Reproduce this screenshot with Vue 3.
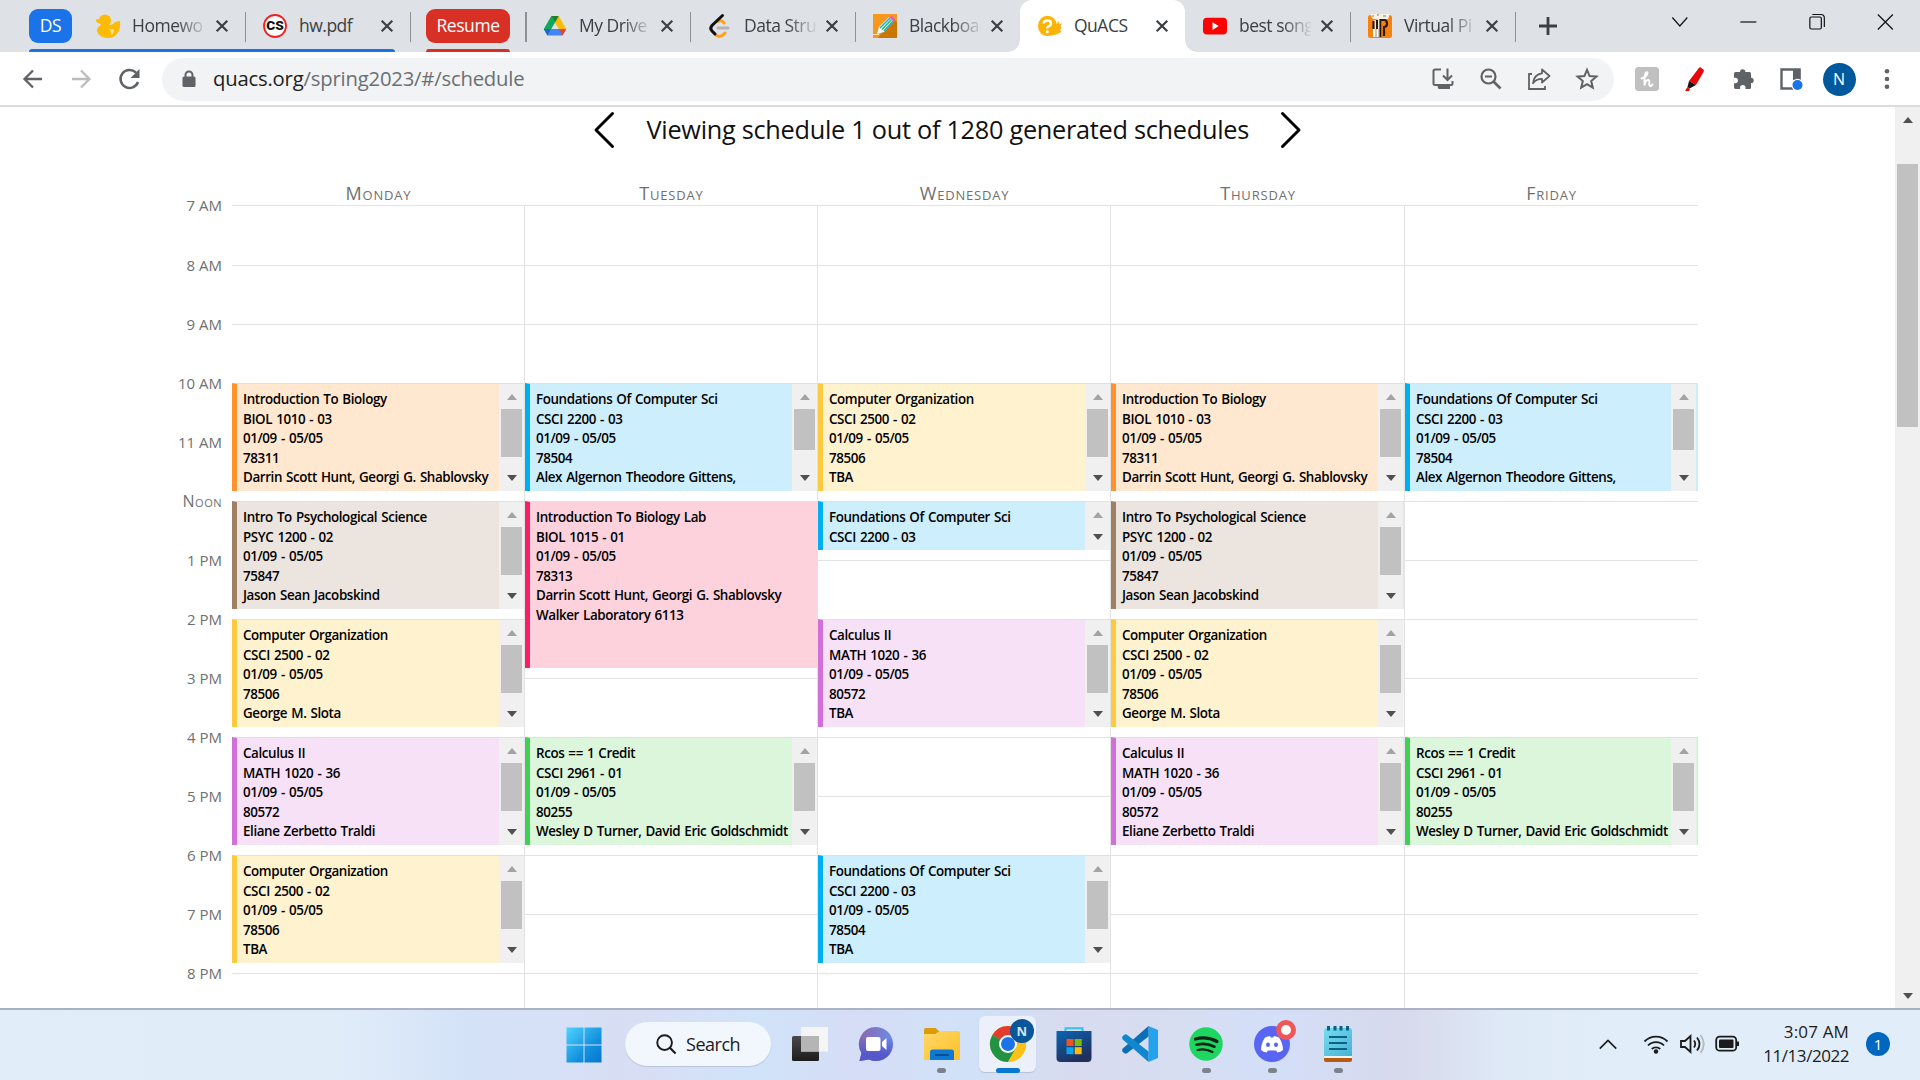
<script setup>
const tabs = [
  { icon: 'duck', title: 'Homewo', fade: true },
  { icon: 'cs', title: 'hw.pdf' },
  { chip: 'Resume' },
  { icon: 'drive', title: 'My Drive', fade: true },
  { icon: 'leet', title: 'Data Stru', fade: true },
  { icon: 'pencil', title: 'Blackboa', fade: true },
  { icon: 'quacs', title: 'QuACS', active: true },
  { icon: 'youtube', title: 'best song', fade: true },
  { icon: 'piano', title: 'Virtual Pi', fade: true },
]

const hours = ['7 AM', '8 AM', '9 AM', '10 AM', '11 AM', 'Noon', '1 PM', '2 PM', '3 PM', '4 PM', '5 PM', '6 PM', '7 PM', '8 PM']

const bio = (extra) => ({ tone: 'orange', lines: ['Introduction To Biology', 'BIOL 1010 - 03', '01/09 - 05/05', '78311', extra], thumb: 48, h: 108 })
const psy = () => ({ tone: 'brown', lines: ['Intro To Psychological Science', 'PSYC 1200 - 02', '01/09 - 05/05', '75847', 'Jason Sean Jacobskind'], thumb: 48, h: 108 })
const org = (who) => ({ tone: 'yellow', lines: ['Computer Organization', 'CSCI 2500 - 02', '01/09 - 05/05', '78506', who], thumb: 48, h: 108 })
const calc = (who) => ({ tone: 'purple', lines: ['Calculus II', 'MATH 1020 - 36', '01/09 - 05/05', '80572', who], thumb: 48, h: 108 })
const focs = (who, thumb) => ({ tone: 'blue', lines: ['Foundations Of Computer Sci', 'CSCI 2200 - 03', '01/09 - 05/05', '78504', who], thumb, h: 108 })
const rcos = () => ({ tone: 'green', lines: ['Rcos == 1 Credit', 'CSCI 2961 - 01', '01/09 - 05/05', '80255', 'Wesley D Turner, David Eric Goldschmidt'], thumb: 48, h: 108 })
const instructors = 'Darrin Scott Hunt, Georgi G. Shablovsky'

const days = [
  { name: 'Monday', slots: { 3: bio(instructors), 5: psy(), 7: org('George M. Slota'), 9: calc('Eliane Zerbetto Traldi'), 11: org('TBA') } },
  {
    name: 'Tuesday',
    slots: {
      3: focs('Alex Algernon Theodore Gittens,', 41),
      5: { tone: 'pink', lines: ['Introduction To Biology Lab', 'BIOL 1015 - 01', '01/09 - 05/05', '78313', instructors, 'Walker Laboratory 6113'], thumb: 0, h: 167, full: true },
      9: rcos(),
    },
  },
  {
    name: 'Wednesday',
    slots: {
      3: org('TBA'),
      5: { tone: 'blue', lines: ['Foundations Of Computer Sci', 'CSCI 2200 - 03'], thumb: 0, h: 49 },
      7: calc('TBA'),
      11: focs('TBA', 48),
    },
  },
  { name: 'Thursday', slots: { 3: bio(instructors), 5: psy(), 7: org('George M. Slota'), 9: calc('Eliane Zerbetto Traldi') } },
  { name: 'Friday', slots: { 3: focs('Alex Algernon Theodore Gittens,', 41), 9: rcos() } },
]
</script>

<template>
  <div class="screen">
    <header class="tabstrip">
      <div class="chip ds">DS</div>
      <template v-for="(t, i) in tabs" :key="i">
        <div v-if="t.chip" class="chip resume">{{ t.chip }}</div>
        <div v-else class="tab" :class="{ active: t.active, first: i === 0, nosep: t.icon === 'pencil' }">
          <svg class="fav" viewBox="0 0 24 24">
            <g v-if="t.icon === 'duck'" fill="#fdbb05">
              <circle cx="9" cy="6.500" r="6" /><path d="M0 5.500l5-1v5H3.500Q0 9 0 5.500z" />
              <path d="M5 11q4 2 8 0 4 0 6-3l5-1q1 8-3 13-3 4-9 4-9 0-11-7 0-4 4-6z" />
              <path d="M13 15h5q0 5-3 6 1-4-2-6z" fill="#ffe49a" />
            </g>
            <g v-else-if="t.icon === 'cs'">
              <circle cx="12" cy="12" r="11" fill="#fff" stroke="#f3201d" stroke-width="1.800" />
              <text x="12" y="16.200" text-anchor="middle" font-family="Roboto, sans-serif" font-weight="900" font-size="12" textLength="17.500" lengthAdjust="spacingAndGlyphs" fill="#111">CS</text>
            </g>
            <g v-else-if="t.icon === 'drive'">
              <path d="M8.300 2h7.400L4.500 21.500.800 15z" fill="#11a85b" /><path d="M15.700 2l7.500 13h-7.400L8.300 2z" fill="#fbbc04" /><path d="M8.300 2h7.400L12 8.400z" fill="#188038" />
              <path d="M8.300 15h14.900l-3.700 6.500h-15z" fill="#4285f4" /><path d="M15.800 15h7.400l-3.700 6.500z" fill="#ea4335" /><path d="M4.500 21.500L8.200 15H.800z" fill="#1967d2" />
            </g>
            <g v-else-if="t.icon === 'leet'" fill="none" stroke-linecap="round" stroke-width="3">
              <path d="M10 7.500q3-2.500 6 1.500M6 19q5 7 11 0" stroke="#ffa116" /><path d="M10 14h10" stroke="#b3b3b3" /><path d="M14.500 1.500L4 11.500q-2.500 3 0 5.500l3 3" stroke="#111" />
            </g>
            <g v-else-if="t.icon === 'pencil'">
              <path d="M0 0h24v24H0z" fill="#f7981d" /><path d="M20 4l4 4v16H5z" fill="#c97700" />
              <path d="M4 20l2-7L16 3l5 4-10 11z" fill="#eafcff" /><path d="M7 14L17 4M11 17l9-10" stroke="#22a9d8" stroke-width="1.500" /><path d="M9 15.500L18.500 5.500" stroke="#35c75a" stroke-width="1.800" /><path d="M16 3l3-1 3 3-1 3z" fill="#e55ac0" /><path d="M0 20.500h6" stroke="#ffe2b0" />
            </g>
            <g v-else-if="t.icon === 'quacs'">
              <ellipse cx="9.500" cy="12" rx="9.500" ry="10.200" fill="#fdb305" /><path d="M13 9l5 2 3-4 .500 3.500L24 9l-1.500 4 1.500.500-2 2.500 1.500 2-5 2.500-6 1z" fill="#fdb305" />
              <path d="M5.500 9.500Q6 6.500 9.500 6.500t3.500 3q0 1.800-2 2.700T9.300 14.500" fill="none" stroke="#fff" stroke-width="2.400" /><circle cx="9.300" cy="17.700" r="1.500" fill="#fff" />
            </g>
            <g v-else-if="t.icon === 'youtube'"><rect y="3.800" width="24" height="16.700" rx="4" fill="#f00" /><path d="M9.500 8.300l6.200 3.800-6.200 3.800z" fill="#fff" /></g>
            <g v-else>
              <rect y="1" width="24" height="23" rx="2.500" fill="#f7820f" /><path d="M2 0h20l-2 5H5z" fill="#fbeee4" /><path d="M4 2h2M9 1h2M15 2h3" stroke="#4a9b6a" /><path d="M5 7l9-3v19H5z" fill="#fff" />
              <path d="M5.500 7v8M9 6v9M12.500 5v18" stroke="#2b1a0c" stroke-width="2.200" /><path d="M8 15v8M11 15v8" stroke="#8a6a4a" stroke-width=".8" /><path d="M12.500 6h3.500q3 0 3 3.500T16 13v9" fill="none" stroke="#2b1a0c" stroke-width="2.200" />
            </g>
          </svg>
          <span class="title" :class="{ fade: t.fade }">{{ t.title }}</span>
          <svg class="x" viewBox="0 0 12 12"><path d="M.700.700l10.600 10.600M11.300.700L.700 11.300" stroke="#3c4043" stroke-width="2.200" /></svg>
        </div>
      </template>
      <svg class="plus" viewBox="0 0 18 18"><path d="M9 0v18M0 9h18" stroke="#3c4043" stroke-width="2.800" /></svg>
      <div class="winctl">
        <svg viewBox="0 0 68 44"><path d="M27 17.500l7.500 8.500 7.500-8.500" /></svg>
        <svg viewBox="0 0 68 44"><path d="M26 22h16" /></svg>
        <svg viewBox="0 0 68 44"><rect x="26.500" y="17" width="11.500" height="12" rx="1.500" /><path d="M29 14.500h8.500q3.500 0 3.500 3.500V27" /></svg>
        <svg viewBox="0 0 68 44"><path d="M26.500 14.500l15 15M41.500 14.500l-15 15" /></svg>
      </div>
    </header>

    <div class="toolbar">
      <svg class="nav" viewBox="0 0 24 24"><path d="M21 12H4M12 3.500L3.500 12l8.500 8.500" fill="none" stroke="#5f6368" stroke-width="2.300" /></svg>
      <svg class="nav" viewBox="0 0 24 24"><path d="M3 12h17M12 3.500l8.500 8.500-8.500 8.500" fill="none" stroke="#babcbe" stroke-width="2.300" /></svg>
      <svg class="nav" viewBox="0 0 24 24"><path d="M21 15a9 9 0 1 1-2-9.300" fill="none" stroke="#5f6368" stroke-width="2.500" /><path d="M22.500 2v9h-9z" fill="#5f6368" /></svg>
      <div class="omnibox">
        <svg class="lock" viewBox="0 0 14 18"><rect x=".5" y="6.500" width="13" height="10.500" rx="1.500" fill="#5f6368" /><path d="M3.500 8V5a3.500 3.500 0 0 1 7 0v3" fill="none" stroke="#5f6368" stroke-width="2" /></svg>
        <span class="url"><b>quacs.org</b>/spring2023/#/schedule</span>
        <div class="actions">
          <svg viewBox="0 0 24 24"><path d="M10 2.500H4q-1.500 0-1.500 1.500v12.500q0 1.500 1.500 1.500h16q1.500 0 1.500-1.500V14" fill="none" stroke="#5f6368" stroke-width="2" /><path d="M6 18h13v4H7.500z" fill="#5f6368" /><path d="M16.500 1.500v11M12 8.500l4.500 4.500L21 8.500" fill="none" stroke="#5f6368" stroke-width="2" /></svg>
          <svg viewBox="0 0 24 24"><circle cx="9.500" cy="9.500" r="7" fill="none" stroke="#5f6368" stroke-width="2.200" /><path d="M14.500 14.500l7 7" stroke="#5f6368" stroke-width="2.600" /><path d="M6 9.500h7" stroke="#5f6368" stroke-width="2" /></svg>
          <svg viewBox="0 0 24 24"><path d="M5 7H2v15h16v-3" fill="none" stroke="#5f6368" stroke-width="1.800" /><path d="M15 2.500l7.500 6.500-7.500 6.500v-3.700q-6 0-9 4.500 1-9 9-10z" fill="none" stroke="#5f6368" stroke-width="1.800" stroke-linejoin="round" /></svg>
          <svg viewBox="0 0 24 24"><path d="M12 2.800l2.600 6.300 6.800.500-5.200 4.400 1.600 6.700-5.800-3.600-5.800 3.600 1.600-6.700-5.200-4.400 6.800-.500z" fill="none" stroke="#5f6368" stroke-width="2" /></svg>
        </div>
      </div>
      <div class="exts">
        <svg viewBox="0 0 24 24"><rect width="24" height="24" rx="3.500" fill="#c0c0c0" /><path d="M6.500 11.500Q12 9.500 12.500 6q-.300-1.500-1.500-.500-1.500 2-1.500 7.500v5.500q1-5.500 3.500-5.500 1.500 0 1.300 2.500-.300 3.500 1.200 3.500 1.200 0 2-1.500" fill="none" stroke="#fff" stroke-width="1.900" stroke-linecap="round" /></svg>
        <svg viewBox="0 0 24 24"><path d="M15.500 1.500L17 0l4 3-.500 2L13 18l-7-4z" fill="#e8090b" /><path d="M6 14l7 4-6.500 3.500-2-1.500z" fill="#1b1414" /><path d="M4.500 20l2.500 2-1 2H2z" fill="#e8090b" /></svg>
        <svg viewBox="0 0 24 24"><path d="M9 5a2.700 2.700 0 0 1 5.400 0h4.100q1.500 0 1.500 1.500v4.200a2.700 2.700 0 0 1 0 5.400v4.400q0 1.500-1.500 1.500h-4v-1.200a2.700 2.700 0 0 0-5.400 0V22H5q-2 0-2-1.500v-4.300h1.200a2.700 2.700 0 0 0 0-5.400H3V6.500Q3 5 4.500 5z" fill="#5f6368" /></svg>
        <svg viewBox="0 0 24 24"><path d="M2.500 2.500h18v19h-18z" fill="none" stroke="#5f6368" stroke-width="2.400" /><path d="M14 2.500h7.500v11H14z" fill="#5f6368" /><circle cx="18.500" cy="18" r="6.200" fill="#fff" /><circle cx="18.500" cy="18" r="5" fill="#1a73e8" /></svg>
        <div class="avatar">N</div>
        <svg viewBox="0 0 24 24"><g fill="#5f6368"><circle cx="12" cy="4.200" r="2.300" /><circle cx="12" cy="12" r="2.300" /><circle cx="12" cy="19.800" r="2.300" /></g></svg>
      </div>
    </div>

    <main class="page">
      <div class="content">
        <div class="pager">
          <svg viewBox="0 0 20 36"><path d="M18.500 1.500L2 18l16.500 16.500" /></svg>
          <h1>Viewing schedule 1 out of 1280 generated schedules</h1>
          <svg viewBox="0 0 20 36"><path d="M1.500 1.500L18 18 1.500 34.500" /></svg>
        </div>
        <div class="schedule">
          <div class="hours">
            <div v-for="h in hours" :key="h" class="hour" :class="{ noon: h === 'Noon' }"><span>{{ h }}</span></div>
          </div>
          <div v-for="d in days" :key="d.name" class="day">
            <div class="dayname">{{ d.name }}</div>
            <div class="cells">
              <div v-for="(h, i) in hours" :key="h" class="cell">
                <article v-if="d.slots[i]" class="event" :class="d.slots[i].tone" :style="{ height: d.slots[i].h + 'px' }">
                  <div class="lines">
                    <p v-for="l in d.slots[i].lines" :key="l">{{ l }}</p>
                  </div>
                  <div v-if="!d.slots[i].full" class="bar">
                    <i class="up"></i>
                    <i v-if="d.slots[i].thumb" class="thumb" :style="{ height: d.slots[i].thumb + 'px' }"></i>
                    <i class="down"></i>
                  </div>
                </article>
              </div>
            </div>
          </div>
        </div>
      </div>
      <div class="pagebar"><i class="up"></i><i class="thumb"></i><i class="down"></i></div>
    </main>

    <footer class="taskbar">
      <div class="apps">
        <div class="app win">
          <svg viewBox="0 0 36 36"><defs><linearGradient id="w" x1="0" y1="0" x2="1" y2="1"><stop stop-color="#4fd4ff" /><stop offset=".6" stop-color="#1492de" /><stop offset="1" stop-color="#0675cf" /></linearGradient></defs><path fill="url(#w)" d="M.500.500h17v17H.500zM18.500.500h17v17h-17zM.500 18.500h17v17H.500zM18.500 18.500h17v17h-17z" /></svg>
        </div>
        <div class="search">
          <svg viewBox="0 0 22 22"><circle cx="9" cy="9" r="7.700" fill="none" stroke="#1b1b1b" stroke-width="2" /><path d="M14.500 14.500l6 6" stroke="#1b1b1b" stroke-width="2.300" /></svg>
          <span>Search</span>
        </div>
        <div class="app">
          <svg viewBox="0 0 36 36"><defs><linearGradient id="tv" x1="0" y1="0" x2="0" y2="1"><stop stop-color="#4a4a4a" /><stop offset="1" stop-color="#1c1c1c" /></linearGradient></defs><rect y="10" width="27" height="25" rx="1.500" fill="url(#tv)" /><path d="M9 1h27v24.500H9z" fill="#f5f5f5" /><path d="M9 10h18v15.500H9z" fill="#b5b5b5" /></svg>
        </div>
        <div class="app">
          <svg viewBox="0 0 36 36"><defs><linearGradient id="ch" x1="0" y1="0" x2="1" y2=".3"><stop stop-color="#8d66a8" /><stop offset="1" stop-color="#6a8ceb" /></linearGradient><linearGradient id="ch2" x1="0" y1="0" x2="0" y2="1"><stop offset=".3" stop-color="#5558c8" stop-opacity="0" /><stop offset=".8" stop-color="#5558c8" /></linearGradient></defs>
            <path d="M18 1a17 17 0 1 1-7 32.500L1.500 35 3.500 27A17 17 0 0 1 18 1z" fill="url(#ch)" /><path d="M18 1a17 17 0 1 1-7 32.500L1.500 35 3.500 27A17 17 0 0 1 18 1z" fill="url(#ch2)" /><rect x="8" y="11" width="14.500" height="14" rx="2" fill="#fff" /><path d="M24 16l4.500-4v12L24 20z" fill="#fff" /></svg>
        </div>
        <div class="app">
          <svg viewBox="0 0 36 36"><defs><linearGradient id="fo" x1="0" y1="0" x2="1" y2="1"><stop stop-color="#ffd866" /><stop offset="1" stop-color="#fcbf29" /></linearGradient></defs><path d="M0 4q0-2 2-2h9.500l4 3.500L11 9H0z" fill="#dd9c06" /><path d="M0 8h11.500l4-3H34q2 0 2 2v27H0z" fill="url(#fo)" /><path d="M6 34V26q0-2.500 2.500-2.500h19Q30 23.500 30 26v8z" fill="#0f78d0" /><path d="M11 29h14" stroke="#0a4e94" stroke-width="2" /></svg>
          <i class="dot"></i>
        </div>
        <div class="app on">
          <svg viewBox="0 0 36 36"><circle cx="18" cy="18" r="18" fill="#fbc116" /><path d="M18 18L2.400 9A18 18 0 0 1 33.600 9z" fill="#e33b2e" /><path d="M2.400 9A18 18 0 0 0 18 36L25.800 22.500 18 18z" fill="#229342" /><path d="M33.600 9H18a9 9 0 0 1 7.800 13.500L18 36A18 18 0 0 0 33.600 9z" fill="#fbc116" /><circle cx="18" cy="18" r="9" fill="#fff" /><circle cx="18" cy="18" r="7" fill="#1a73e8" /></svg>
          <b class="nbadge">N</b>
          <i class="dot wide"></i>
        </div>
        <div class="app">
          <svg viewBox="0 0 36 36"><defs><linearGradient id="st" x1="0" y1="0" x2=".5" y2="1"><stop stop-color="#0b66b4" /><stop offset="1" stop-color="#202f5c" /></linearGradient></defs><path d="M9.500 6V2.200h17V6" fill="none" stroke="#35bff0" stroke-width="2" /><path d="M.500 5h35v27q0 4-4 4h-27q-4 0-4-4z" fill="url(#st)" /><path d="M10.500 13h7v7h-7z" fill="#f4511e" /><path d="M18.700 13h7v7h-7z" fill="#80ba04" /><path d="M10.500 21.200h7v7h-7z" fill="#05a6f0" /><path d="M18.700 21.200h7v7h-7z" fill="#ffba08" /></svg>
        </div>
        <div class="app">
          <svg viewBox="0 0 36 36"><path d="M26.500 0L36 4v28l-9.500 4z" fill="#24a2ee" /><path d="M26.500 0v10.500L5 27.300q-1.500.800-3-.300L.500 25.500q-1-1.500.300-3z" fill="#0a6fb5" /><path d="M26.500 36V25.500L5 8.700q-1.500-.800-3 .300L.500 10.500q-1 1.500.300 3z" fill="#1087cf" /></svg>
        </div>
        <div class="app">
          <svg viewBox="0 0 36 36"><circle cx="18" cy="18" r="16.700" fill="#1ed760" /><path d="M7.500 13q11-3 21.500 2.500" fill="none" stroke="#14231a" stroke-width="3.200" stroke-linecap="round" /><path d="M8.500 18.700q9.500-2.500 18 2" fill="none" stroke="#14231a" stroke-width="2.700" stroke-linecap="round" /><path d="M9.500 24q8-2 15 2" fill="none" stroke="#14231a" stroke-width="2.200" stroke-linecap="round" /></svg>
          <i class="dot"></i>
        </div>
        <div class="app">
          <svg viewBox="0 0 36 36"><circle cx="18" cy="18" r="18" fill="#5865f2" /><path d="M11 11.500q3-1.500 5-1.500l.700 1.500h2.600L20 10q2 0 5 1.500 4 6 4 12.500-2.500 2-5.500 2.500L22 24.500h-8l-1.500 2Q9.500 26 7 24q0-6.500 4-12.500z" fill="#fff" /><ellipse cx="14" cy="18.800" rx="2" ry="2.300" fill="#5865f2" /><ellipse cx="22" cy="18.800" rx="2" ry="2.300" fill="#5865f2" /></svg>
          <b class="rbadge"></b>
          <i class="dot"></i>
        </div>
        <div class="app">
          <svg viewBox="0 0 36 36"><defs><linearGradient id="np" x1="0" y1="0" x2="1" y2="1"><stop stop-color="#76dcf0" /><stop offset="1" stop-color="#48b2d4" /></linearGradient></defs><path d="M4 31h28v3q0 2-2 2H6q-2 0-2-2z" fill="#b85a10" /><path d="M4 29h28v3H4z" fill="#f4f4f4" /><path d="M4 5q0-3 3-3h22q3 0 3 3v25H4z" fill="url(#np)" /><path d="M8.500 0v4.500M15 0v4.500M21 0v4.500M27.500 0v4.500" stroke="#0b5f80" stroke-width="3" /><path d="M9 11h18M9 17h18M9 23h18" stroke="#0c6283" stroke-width="2" /></svg>
          <i class="dot"></i>
        </div>
      </div>
      <div class="tray">
        <svg class="chev" viewBox="0 0 24 24"><path d="M3 17l9-9 9 9" /></svg>
        <svg class="wifi" viewBox="0 0 26 24"><path d="M1.500 9.500a16 16 0 0 1 23 0M5 13.500a11 11 0 0 1 16 0M8.800 17a6 6 0 0 1 8.400 0" /><circle cx="13" cy="19.500" r="2.200" fill="#1b1b1b" stroke="none" /></svg>
        <svg class="vol" viewBox="0 0 26 24"><path d="M2 9h4l5.500-5v16L6 15H2zM15 8.500q2.500 3.500 0 7M18 5.500q5 6.500 0 13" /><path d="M21.500 3q6.500 9 0 18" stroke="#b4bac1" /></svg>
        <svg class="bat" viewBox="0 0 26 24"><rect x="1.200" y="4.700" width="20" height="14" rx="3.500" /><rect x="4" y="7.500" width="14.500" height="8.500" rx="1" fill="#1b1b1b" stroke="none" /><path d="M22.500 9.500v4.500" stroke-width="3" /></svg>
        <div class="clock"><span class="time">3:07 AM</span><span class="date">11/13/2022</span></div>
        <div class="notif">1</div>
      </div>
    </footer>
  </div>
</template>

<style>
body { overflow: hidden; background: #fff; }
</style>

<style scoped>
.screen { width: 1920px; height: 1080px; display: flex; flex-direction: column; font-family: "Open Sans", "Noto Sans", sans-serif; overflow: hidden; background: #fff; }
svg { display: block; flex: none; overflow: visible; }
p, h1 { margin: 0; }

.tabstrip { flex: none; height: 52px; background: #dee1e6; display: flex; box-sizing: border-box; padding-left: 29px; }
.chip { position: relative; flex: none; height: 34px; margin-top: 9px; border-radius: 9px; color: #fff; font-size: 17.500px; letter-spacing: -.450px; line-height: 33px; text-align: center; }
.chip::after { content: ""; position: absolute; left: 0; top: 40px; height: 3px; border-radius: 3px 3px 0 0; }
.ds { width: 43px; background: #1a73e8; margin-right: 8px; }
.ds::after { width: 366px; background: #1a73e8; }
.resume { width: 84px; margin: 9px 15px 0 16px; background: #d93025; }
.resume::after { width: 84px; background: #d93025; }
.resume + .tab::before { content: ""; position: absolute; left: 0; top: 12px; width: 1.500px; height: 30px; background: #8d9196; }
.tab { position: relative; flex: none; width: 165px; height: 52px; box-sizing: border-box; display: flex; align-items: center; padding: 0 17px 0 18px; }
.tab.first { padding-left: 16px; }
.tab::after { content: ""; position: absolute; right: -1px; top: 12px; width: 1.500px; height: 30px; background: #8d9196; }
.tab.nosep::after { display: none; }
.tab.active { background: #fff; border-radius: 12px 12px 0 0; z-index: 1; }
.tab.active::before, .tab.active::after { content: ""; position: absolute; top: auto; bottom: 0; width: 12px; height: 12px; }
.tab.active::before { left: -12px; background: radial-gradient(circle at 0 0, transparent 11.500px, #fff 12px); }
.tab.active::after { right: -12px; background: radial-gradient(circle at 100% 0, transparent 11.500px, #fff 12px); }
.fav { width: 24px; height: 24px; margin: 0 12px 0 0; }
.title { flex: 1; min-width: 0; overflow: hidden; white-space: nowrap; font-size: 17.500px; letter-spacing: -.500px; line-height: 26px; margin-top: -2px; color: #3c4043; }
.title.fade { -webkit-mask-image: linear-gradient(90deg, #000 60%, transparent 103%); mask-image: linear-gradient(90deg, #000 60%, transparent 103%); }
.x { width: 12px; height: 12px; margin-left: 10px; }
.plus { width: 18px; height: 18px; margin: 17px 0 0 24px; }
.winctl { margin-left: auto; display: flex; }
.winctl svg { width: 68.700px; height: 44px; }
.winctl svg path, .winctl svg rect { fill: none; stroke: #111; stroke-width: 1.200; }

.toolbar { flex: none; height: 55px; box-sizing: border-box; border-bottom: 2px solid #dcdcdc; display: flex; align-items: center; padding: 1px 0 0 21px; background: #fff; }
.nav { width: 24px; height: 24px; margin-right: 24px; }
.omnibox { width: 1452px; height: 43px; margin-left: -3px; border-radius: 22px; background: #f1f3f4; display: flex; align-items: center; }
.lock { width: 14px; height: 18px; margin: 0 17px 0 20px; }
.url { font-size: 20.300px; letter-spacing: -.200px; color: #6b6f73; white-space: nowrap; margin-top: -2px; }
.url b { font-weight: 400; color: #202124; }
.actions { margin-left: auto; display: flex; gap: 24px; padding-right: 15px; }
.actions svg, .exts svg { width: 24px; height: 24px; }
.exts { display: flex; align-items: center; gap: 24px; margin-left: 21px; }
.avatar { width: 33px; height: 33px; margin: 0 -4.500px; border-radius: 50%; background: #00599c; color: #fff; font-size: 16px; line-height: 33px; text-align: center; }

.page { flex: none; height: 901px; display: flex; overflow: hidden; }
.content { flex: 1; overflow: hidden; }
.pager { display: flex; align-items: center; justify-content: center; gap: 32px; height: 46px; }
.pager svg { width: 20px; height: 36px; }
.pager path { fill: none; stroke: #000; stroke-width: 3; stroke-linejoin: round; stroke-linecap: round; }
.pager h1 { font-weight: 400; font-size: 25.300px; letter-spacing: -.280px; width: 602px; white-space: nowrap; color: #111; margin-top: -2px; }
.pager svg:first-child { margin-left: -1px; margin-right: 1px; }
.schedule { display: flex; margin: 29px 0 0 172px; width: 1526px; }
.hours { flex: none; width: 60px; padding-top: 13px; }
.hour { height: 59px; }
.hour:first-child { height: 60px; }
.hour span { display: block; text-align: right; padding-right: 10px; font-size: 15px; line-height: 20px; color: #707070; font-variant: small-caps; white-space: nowrap; }
.hour.noon span { font-size: 16px; letter-spacing: .500px; }
.day { flex: none; width: 293px; }
.day:nth-child(5) { width: 294px; }
.day:nth-child(5) .event { padding-right: 1px; }
.dayname { height: 23px; line-height: 23px; text-align: center; font-size: 18px; letter-spacing: .800px; color: #707070; font-variant: small-caps; }
.cells { border-right: 1px solid #e3e3e3; }
.day:last-child .cells { border-right: 0; }
.cell { position: relative; height: 59px; box-sizing: border-box; border-top: 1px solid #e3e3e3; }
.cell:first-child { height: 60px; }
.event { position: absolute; z-index: 1; top: -1px; left: 0; right: 0; display: flex; box-sizing: border-box; border-left: 5px solid; border-top: 1px solid #e0e0e0; overflow: hidden; }
.day:last-child .event { padding-right: 1px; border-right: 1px solid #e3e3e3; }
.lines { flex: 1; min-width: 0; padding: 6px 0 0 6px; }
.lines p { font-size: 13.400px; letter-spacing: -.400px; word-spacing: 1px; line-height: 19.600px; font-weight: 600; white-space: nowrap; color: #000; }
.bar { flex: none; width: 25px; background: #f0f0f0; display: flex; flex-direction: column; align-items: center; }
.bar .thumb { width: 21px; background: #c1c1c1; margin-top: 9px; }
.up { border: 5.500px solid transparent; border-top: 0; border-bottom: 6px solid #a3a3a3; margin-top: 10px; }
.down { border: 5.500px solid transparent; border-bottom: 0; border-top: 6px solid #505050; margin-top: auto; margin-bottom: 10px; }
.orange { background: #ffe8cf; border-left-color: #ff922f; }
.brown { background: #ece5df; border-left-color: #a08060; }
.yellow { background: #fef2cf; border-left-color: #fcc940; }
.purple { background: #f6e1f7; border-left-color: #d070d8; }
.blue { background: #cdeefc; border-left-color: #00aff0; }
.pink { background: #fdd2dd; border-left-color: #fd1d65; }
.green { background: #dbf6db; border-left-color: #40d055; }
.pagebar { flex: none; width: 25px; background: #f0f0f0; display: flex; flex-direction: column; align-items: center; }
.pagebar .up { border-bottom-color: #505050; margin-top: 10px; }
.pagebar .thumb { width: 21px; height: 263px; margin-top: 41px; background: #c1c1c1; }
.pagebar .down { margin-bottom: 9px; }

.taskbar { flex: none; height: 72px; box-sizing: border-box; border-top: 2px solid #abb3c2; background: linear-gradient(90deg, #e1edf8 0, #e0ecf8 340px, #d4e2f8 470px, #d8def4 640px, #d0e3f9 750px, #d6ddf6 860px, #d0e2f9 960px, #d8dbef 1070px, #d7def2 1180px, #d3dff8 1270px, #d7d9ec 1400px, #dfeaf7 1510px, #e1edf8 1600px, #e1edf9 100%); display: flex; justify-content: space-between; }
.apps { display: flex; margin-left: 551px; height: 70px; align-items: center; }
.app { position: relative; width: 66.100px; height: 70px; display: flex; align-items: center; justify-content: center; padding-bottom: 2px; box-sizing: border-box; }
.app svg { width: 36px; height: 36px; position: relative; }
.win { padding-bottom: 1px; }
.search { width: 146px; height: 44px; margin: 0 5.500px 2px 8px; border-radius: 22px; background: #f2f6fd; box-shadow: 0 1px 1px #b9c2da; display: flex; align-items: center; box-sizing: border-box; padding-left: 31px; font-size: 18px; letter-spacing: -.500px; color: #1b1b1b; gap: 9px; }
.search svg { width: 21px; height: 21px; }
.dot { position: absolute; left: 50%; bottom: 7px; width: 9px; height: 5px; margin-left: -4.500px; border-radius: 3px; background: #7c828c; }
.dot.wide { width: 24px; margin-left: -12px; background: #0678d4; }
.on::before { content: ""; position: absolute; left: 4px; top: 6px; width: 57px; height: 56px; border-radius: 6px; background: #ebf0fa; box-shadow: 0 1px 1px #b9c0d2; }
.nbadge { position: absolute; left: 35px; top: 9px; width: 24px; height: 24px; border-radius: 50%; background: #0a569b; color: #cfe4f8; font-size: 13px; line-height: 24px; text-align: center; }
.rbadge { position: absolute; left: 37px; top: 10px; width: 10px; height: 10px; border: 5.500px solid #f05657; border-radius: 50%; background: #fff; }
.tray { display: flex; align-items: center; height: 70px; padding-right: 30px; }
.tray svg { height: 24px; fill: none; stroke: #1b1b1b; stroke-width: 1.800; }
.tray > * { margin-bottom: 2px; }
.chev { width: 22px; margin-right: 24px; }
.wifi, .vol, .bat { width: 26px; margin-right: 10px; }
.clock { width: 98px; display: flex; flex-direction: column; text-align: right; font-size: 17px; line-height: 24px; color: #1b1b1b; white-space: nowrap; }
.time { letter-spacing: .150px; }
.date { letter-spacing: -.450px; }
.notif { width: 24px; height: 24px; margin-left: 17px; border-radius: 50%; background: #0067c0; color: #fff; font-size: 15px; line-height: 24px; text-align: center; }
</style>
